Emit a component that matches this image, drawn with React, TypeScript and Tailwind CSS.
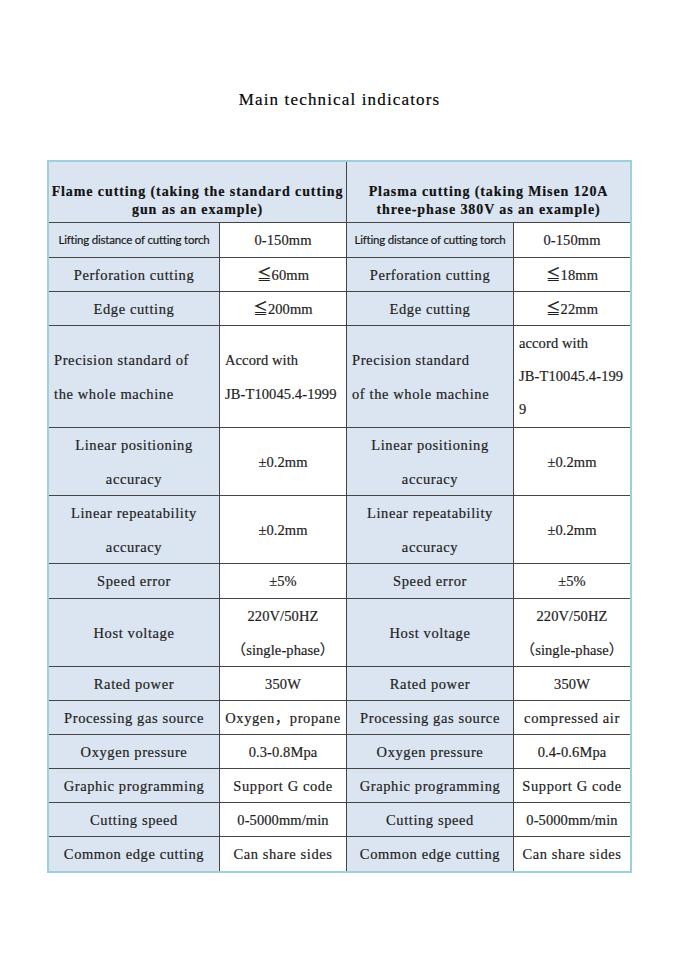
import React from 'react';

type Cell = {
  lines: string[];
  left?: boolean;
  sans?: boolean;
  tight?: boolean;
  num?: boolean;
};

type Row = [Cell, Cell, Cell, Cell];

const c = (text: string | string[], opts: Partial<Cell> = {}): Cell => ({
  lines: Array.isArray(text) ? text : [text],
  ...opts,
});

// numeric values are set tighter, like the source document
const n = (text: string | string[], opts: Partial<Cell> = {}) => c(text, { num: true, ...opts });

const rows: Row[] = [
  [
    c('Lifting distance of cutting torch', { sans: true }),
    n('0-150mm'),
    c('Lifting distance of cutting torch', { sans: true }),
    n('0-150mm'),
  ],
  [c('Perforation cutting'), n('≦60mm'), c('Perforation cutting'), n('≦18mm')],
  [c('Edge cutting'), n('≦200mm'), c('Edge cutting'), n('≦22mm')],
  [
    c(['Precision standard of', 'the whole machine'], { left: true }),
    n(['Accord with', 'JB-T10045.4-1999'], { left: true }),
    c(['Precision standard', 'of the whole machine'], { left: true }),
    n(['accord with', 'JB-T10045.4-199', '9'], { left: true, tight: true }),
  ],
  [
    c(['Linear positioning', 'accuracy']),
    n('±0.2mm'),
    c(['Linear positioning', 'accuracy']),
    n('±0.2mm'),
  ],
  [
    c(['Linear repeatability', 'accuracy']),
    n('±0.2mm'),
    c(['Linear repeatability', 'accuracy']),
    n('±0.2mm'),
  ],
  [c('Speed error'), n('±5%'), c('Speed error'), n('±5%')],
  [
    c('Host voltage'),
    n(['220V/50HZ', '（single-phase）']),
    c('Host voltage'),
    n(['220V/50HZ', '（single-phase）']),
  ],
  [c('Rated power'), n('350W'), c('Rated power'), n('350W')],
  [
    c('Processing gas source'),
    c('Oxygen，propane'),
    c('Processing gas source'),
    c('compressed air'),
  ],
  [c('Oxygen pressure'), n('0.3-0.8Mpa'), c('Oxygen pressure'), n('0.4-0.6Mpa')],
  [
    c('Graphic programming'),
    c('Support G code'),
    c('Graphic programming'),
    c('Support G code'),
  ],
  [c('Cutting speed'), n('0-5000mm/min'), c('Cutting speed'), n('0-5000mm/min')],
  [
    c('Common edge cutting'),
    c('Can share sides'),
    c('Common edge cutting'),
    c('Can share sides'),
  ],
];

const TableCell = ({ cell, shaded }: { cell: Cell; shaded: boolean }) => (
  <div
    className={`flex flex-col justify-center overflow-hidden ${
      cell.left ? 'items-start px-[5px]' : 'items-center px-1'
    } ${shaded ? 'bg-[#dbe5f1]' : 'bg-white'}`}
  >
    {cell.lines.map((line, i) => (
      <span
        key={i}
        className={
          cell.sans
            ? "font-['Lato','Noto_Sans',sans-serif] text-[11.5px] tracking-[-0.2px] leading-[16px] whitespace-nowrap text-[#1a1a1a]"
            : `text-[14.5px] whitespace-nowrap ${cell.num ? 'tracking-[0.1px]' : 'tracking-[0.6px]'} ${
                cell.lines.length > 1
                  ? cell.tight
                    ? 'leading-[33px]'
                    : 'leading-[34px]'
                  : 'leading-[18px]'
              }`
        }
      >
        {line}
      </span>
    ))}
  </div>
);

const App = () => {
  return (
    <div className="min-h-[960px] w-full bg-white pt-[90px] text-[#1f1f1f] [-webkit-text-stroke:0.2px_#1f1f1f] font-['Liberation_Serif','Noto_Sans_CJK_SC',serif]">
      <h1 className="text-center text-[17px] leading-[20px] tracking-[1.15px] text-black">
        Main technical indicators
      </h1>

      <div className="mx-auto mt-[50px] w-[585px] border-2 border-[#9fcfd9]">
        <div className="grid grid-cols-[170px_126px_166px_116px] grid-rows-[60px_34px_33px_33px_101px_67px_67px_34px_67px_33px_33px_33px_33px_33px_34px] gap-px bg-[#454545]">
          <div className="col-span-2 flex flex-col items-center justify-end bg-[#dbe5f1] pb-[3px] text-[14px] font-bold leading-[18px] tracking-[0.9px] text-[#111]">
            <span className="whitespace-nowrap">Flame cutting (taking the standard cutting</span>
            <span className="whitespace-nowrap">gun as an example)</span>
          </div>
          <div className="col-span-2 flex flex-col items-center justify-end bg-[#dbe5f1] pb-[3px] text-[14px] font-bold leading-[18px] tracking-[0.9px] text-[#111]">
            <span className="whitespace-nowrap">Plasma cutting (taking Misen 120A</span>
            <span className="whitespace-nowrap">three-phase 380V as an example)</span>
          </div>

          {rows.map((row, r) =>
            row.map((cell, i) => (
              <TableCell key={`${r}-${i}`} cell={cell} shaded={i % 2 === 0} />
            ))
          )}
        </div>
      </div>
    </div>
  );
};

export default App;
